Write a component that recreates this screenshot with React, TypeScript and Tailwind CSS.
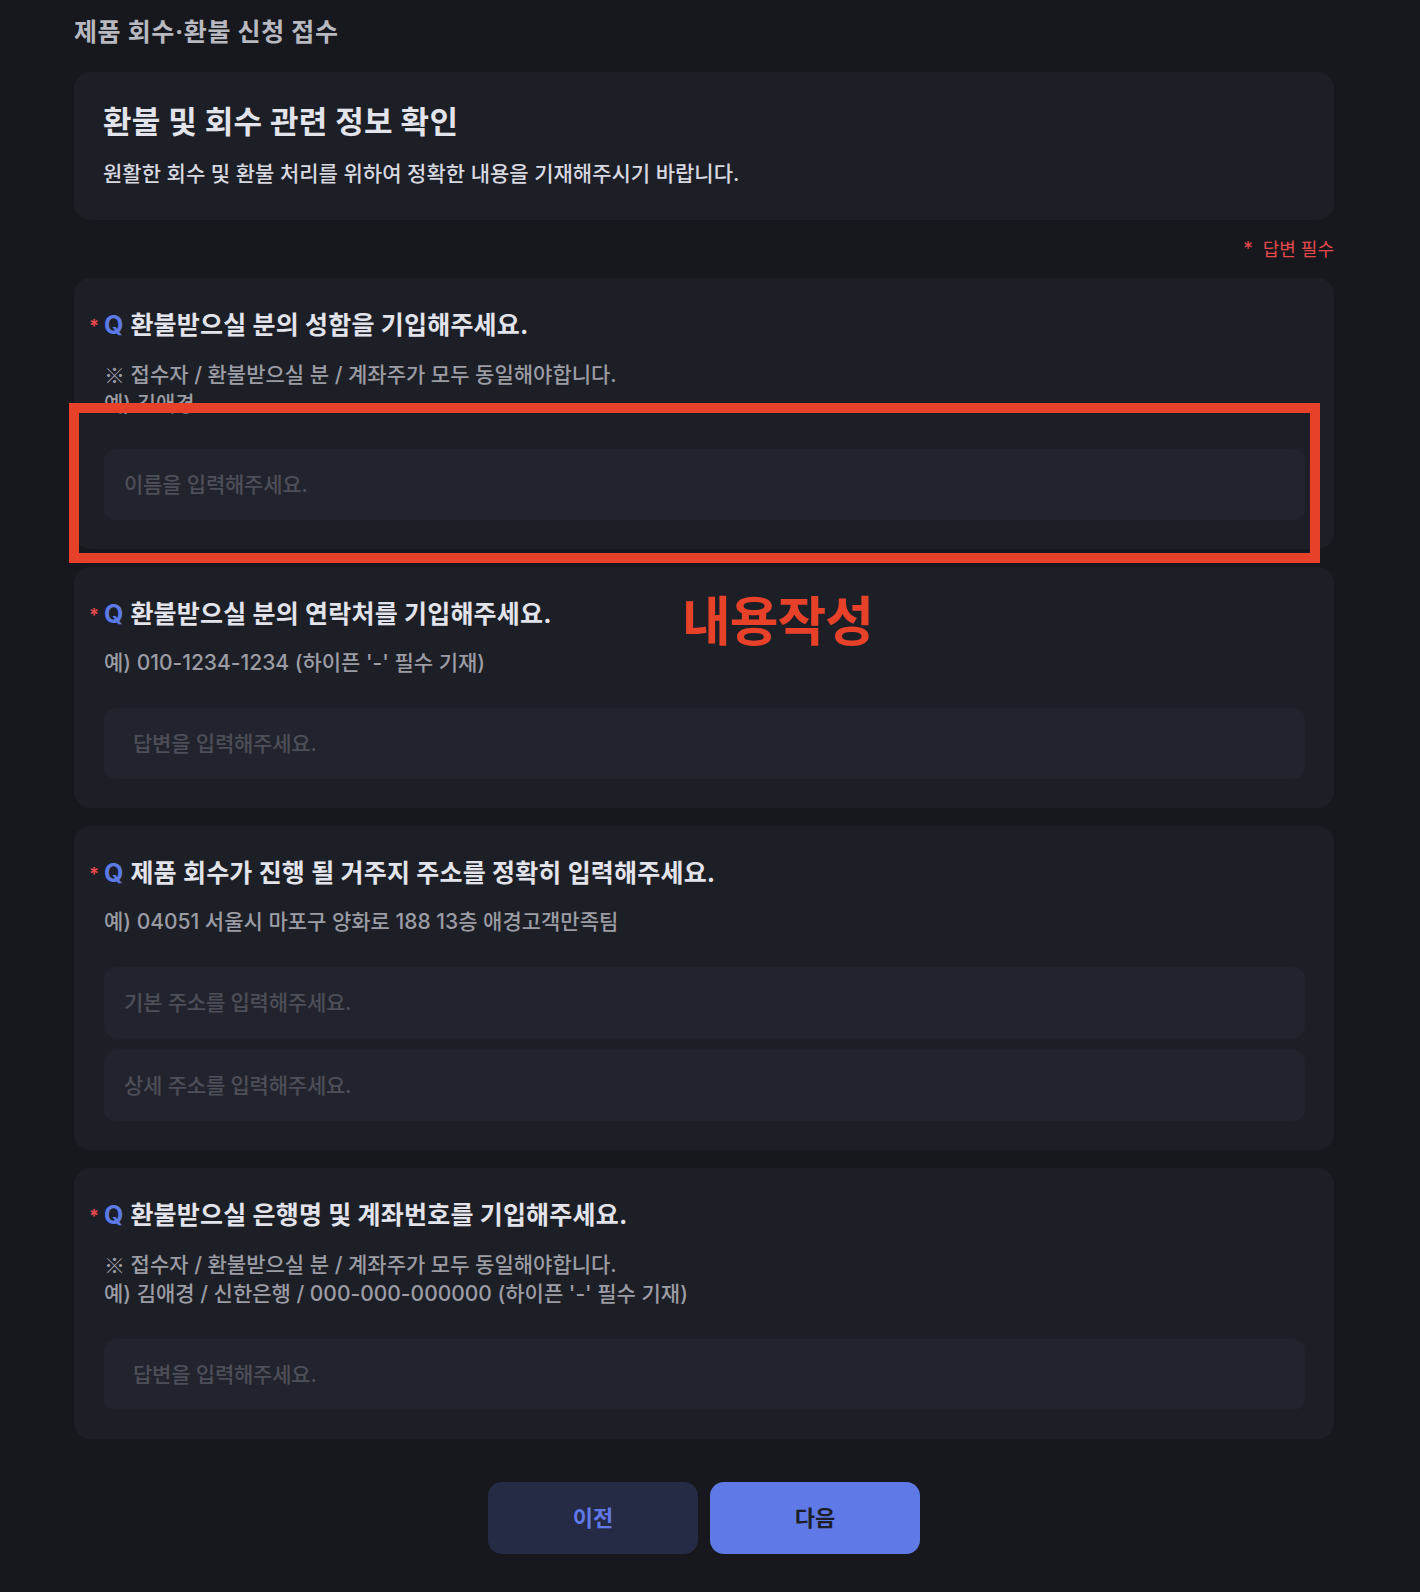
import React from "react";

type Q = {
  title: string;
  subs: string[];
  inputs: { ph: string; pl: string }[];
};

const questions: Q[] = [
  {
    title: "환불받으실 분의 성함을 기입해주세요.",
    subs: ["※ 접수자 / 환불받으실 분 / 계좌주가 모두 동일해야합니다.", "예) 김애경"],
    inputs: [{ ph: "이름을 입력해주세요.", pl: "pl-[20px]" }],
  },
  {
    title: "환불받으실 분의 연락처를 기입해주세요.",
    subs: ["예) 010-1234-1234 (하이픈 '-' 필수 기재)"],
    inputs: [{ ph: "답변을 입력해주세요.", pl: "pl-[29px]" }],
  },
  {
    title: "제품 회수가 진행 될 거주지 주소를 정확히 입력해주세요.",
    subs: ["예) 04051 서울시 마포구 양화로 188 13층 애경고객만족팀"],
    inputs: [
      { ph: "기본 주소를 입력해주세요.", pl: "pl-[20px]" },
      { ph: "상세 주소를 입력해주세요.", pl: "pl-[20px]" },
    ],
  },
  {
    title: "환불받으실 은행명 및 계좌번호를 기입해주세요.",
    subs: [
      "※ 접수자 / 환불받으실 분 / 계좌주가 모두 동일해야합니다.",
      "예) 김애경 / 신한은행 / 000-000-000000 (하이픈 '-' 필수 기재)",
    ],
    inputs: [{ ph: "답변을 입력해주세요.", pl: "pl-[29px]" }],
  },
];

function SubLine({ s }: { s: string }) {
  if (s.startsWith("※")) {
    return (
      <div className="h-[30px] flex items-center whitespace-pre">
        <span className="font-['Noto_Sans_CJK_KR',sans-serif] leading-none">※</span>
        <span className="leading-none">{s.slice(1)}</span>
      </div>
    );
  }
  return <div className="h-[30px] whitespace-pre">{s}</div>;
}

function QuestionCard({ q }: { q: Q }) {
  return (
    <div className="rounded-2xl bg-[#1d1f27] pl-[30px] pr-[29px] pt-8 pb-[29px]">
      <div className="relative flex items-center h-8">
        <span className="absolute left-[-15px] top-[7px] text-[18px] leading-none text-[#e5484d] font-bold">*</span>
        <span className="text-[25px] font-bold text-[#5c7ae6] mr-[7px]">Q</span>
        <span className="text-[25px] font-bold text-[#e3e4eb] tracking-[0.2px] whitespace-nowrap">{q.title}</span>
      </div>
      <div className="mt-[17px] text-[21px] leading-[30px] font-medium text-[#9b9ca4]">
        {q.subs.map((s, i) => (
          <SubLine key={i} s={s} />
        ))}
      </div>
      <div className="mt-[30px] flex flex-col gap-3">
        {q.inputs.map((inp, i) => (
          <input
            key={i}
            readOnly
            placeholder={inp.ph}
            className={`h-[71px] w-full rounded-xl bg-[#22242d] ${inp.pl} text-[21px] font-medium tracking-[-0.2px] text-[#e3e4eb] placeholder:text-[#4d4f58] outline-none`}
          />
        ))}
      </div>
    </div>
  );
}

export default function App() {
  return (
    <div className="relative min-h-[1592px] bg-[#17181d] font-['Inter','Noto_Sans_CJK_KR',sans-serif]">
      <div className="ml-[74px] w-[1260px] pt-4">
        <h1 className="text-[25px] leading-8 font-bold text-[#b8b9c0] tracking-[0.6px]">제품 회수·환불 신청 접수</h1>
        <div className="mt-6 rounded-2xl bg-[#1d1f27] px-[29px] pt-[30px] pb-[32px]">
          <h2 className="text-[31px] leading-[40px] font-bold text-[#e3e4eb] tracking-[0.3px]">환불 및 회수 관련 정보 확인</h2>
          <p className="mt-[18px] text-[21px] leading-[28px] font-medium text-[#d8d9e0]">
            원활한 회수 및 환불 처리를 위하여 정확한 내용을 기재해주시기 바랍니다.
          </p>
        </div>
        <div className="mt-[15px] mb-[15px] flex justify-end items-center h-7 text-[18px] text-[#e5484d]">
          <span className="mr-[10px] text-[19px]">*</span>
          <span>답변 필수</span>
        </div>
        <div className="flex flex-col gap-[18px]">
          {questions.map((q, i) => (
            <QuestionCard key={i} q={q} />
          ))}
        </div>
        <div className="mt-[43px] flex justify-center gap-3">
          <button className="h-[72px] w-[210px] rounded-[14px] bg-[#252a45] text-[22px] font-semibold text-[#6079e6]">이전</button>
          <button className="h-[72px] w-[210px] rounded-[14px] bg-[#5f7ae6] text-[22px] font-semibold text-[#1c1e2a]">다음</button>
        </div>
      </div>

      <div className="absolute left-[69px] top-[403px] w-[1251px] h-[160px] border-[10px] border-[#e8412a]" />
      <div className="absolute left-[682px] top-[588px] text-[53px] leading-[68px] font-bold text-[#e8412a] tracking-[-1px]">
        내용작성
      </div>
    </div>
  );
}
